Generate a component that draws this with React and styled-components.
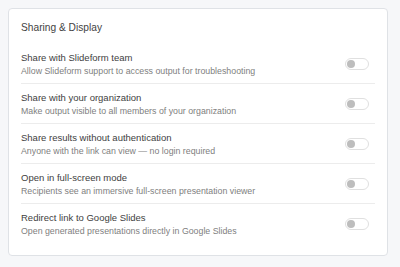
import React from "react";
import styled, { createGlobalStyle } from "styled-components";

const Global = createGlobalStyle`
  html, body { background: #f6f7f9; }
  body {
    margin: 8px;
    font-family: "Liberation Sans", Arial, Helvetica, sans-serif;
  }
`;

const Card = styled.section`
  width: 380px;
  box-sizing: border-box;
  background: #ffffff;
  border: 1px solid #dfe2e6;
  border-radius: 4px;
  padding: 12px;
`;

const Heading = styled.h2`
  margin: 0 0 9px 0;
  font-size: 10.2px;
  line-height: 14px;
  font-weight: 400;
  color: #434343;
`;

const Row = styled.div`
  display: flex;
  align-items: center;
  justify-content: space-between;
  padding: 7px 0 6px 0;
  border-bottom: ${(p) => (p.$last ? "none" : "1px solid #ececec")};
`;

const Text = styled.div`
  display: flex;
  flex-direction: column;
  gap: 1px;
`;

const Title = styled.div`
  font-size: 9.5px;
  line-height: 13px;
  color: #3e3e3e;
`;

const Desc = styled.div`
  font-size: 8.8px;
  line-height: 12px;
  color: #808080;
`;

const Toggle = styled.button`
  position: relative;
  flex: none;
  width: 24px;
  height: 12px;
  box-sizing: border-box;
  margin: 0 6px 0 0;
  padding: 0;
  border: 1px solid #e0e0e0;
  border-radius: 6px;
  background: #ffffff;
  cursor: pointer;
`;

const Knob = styled.span`
  position: absolute;
  top: 1px;
  left: 1px;
  width: 8px;
  height: 8px;
  border-radius: 50%;
  background: #bdbdbd;
`;

const items = [
  ["Share with Slideform team", "Allow Slideform support to access output for troubleshooting"],
  ["Share with your organization", "Make output visible to all members of your organization"],
  ["Share results without authentication", "Anyone with the link can view — no login required"],
  ["Open in full-screen mode", "Recipients see an immersive full-screen presentation viewer"],
  ["Redirect link to Google Slides", "Open generated presentations directly in Google Slides"],
];

export default function App() {
  return (
    <>
      <Global />
      <Card>
        <Heading>Sharing &amp; Display</Heading>
        {items.map(([t, d], i) => (
          <Row key={t} $last={i === items.length - 1}>
            <Text>
              <Title>{t}</Title>
              <Desc>{d}</Desc>
            </Text>
            <Toggle aria-label={t}>
              <Knob />
            </Toggle>
          </Row>
        ))}
      </Card>
    </>
  );
}
